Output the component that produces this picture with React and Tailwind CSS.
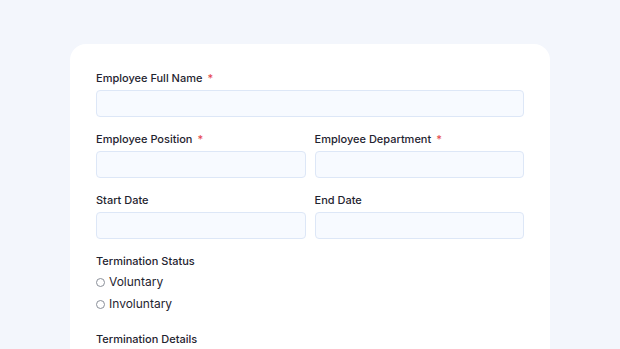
import React from 'react';

const font = { fontFamily: 'Inter, "Noto Sans", sans-serif' };

const Label = ({ children, required }) => (
    <label className="flex items-center h-[16px] text-[11px] font-medium text-[#1f2430]">
        {children}
        {required && <span className="ml-[5px] text-[#e5484d]">*</span>}
    </label>
);

const Input = () => (
    <div className="h-[27px] w-full rounded-[4px] border border-[#dde7f7] bg-[#f7faff]" />
);

const Field = ({ label, required }) => (
    <div className="flex flex-col gap-[4px]">
        <Label required={required}>{label}</Label>
        <Input />
    </div>
);

const Radio = ({ label }) => (
    <div className="flex items-center gap-[4px] h-[22px]">
        <span className="w-[9px] h-[9px] rounded-full border border-[#8a8f99] bg-white" />
        <span className="text-[12px] text-[#1f2430]">{label}</span>
    </div>
);

export default function App() {
    return (
        <div className="w-[620px] h-[349px] overflow-hidden bg-[#f3f6fc] pt-[44px] px-[70px]" style={font}>
            <div className="bg-white rounded-t-[16px] h-[320px] px-[26px] pt-[26px] flex flex-col">
                <Field label="Employee Full Name" required />
                <div className="grid grid-cols-2 gap-x-[9px] mt-[14px]">
                    <Field label="Employee Position" required />
                    <Field label="Employee Department" required />
                </div>
                <div className="grid grid-cols-2 gap-x-[9px] mt-[14px]">
                    <Field label="Start Date" />
                    <Field label="End Date" />
                </div>
                <div className="mt-[14px]">
                    <Label>Termination Status</Label>
                    <div className="mt-[2px]">
                        <Radio label="Voluntary" />
                        <Radio label="Involuntary" />
                    </div>
                </div>
                <div className="mt-[16px]">
                    <Label>Termination Details</Label>
                </div>
            </div>
        </div>
    );
}
